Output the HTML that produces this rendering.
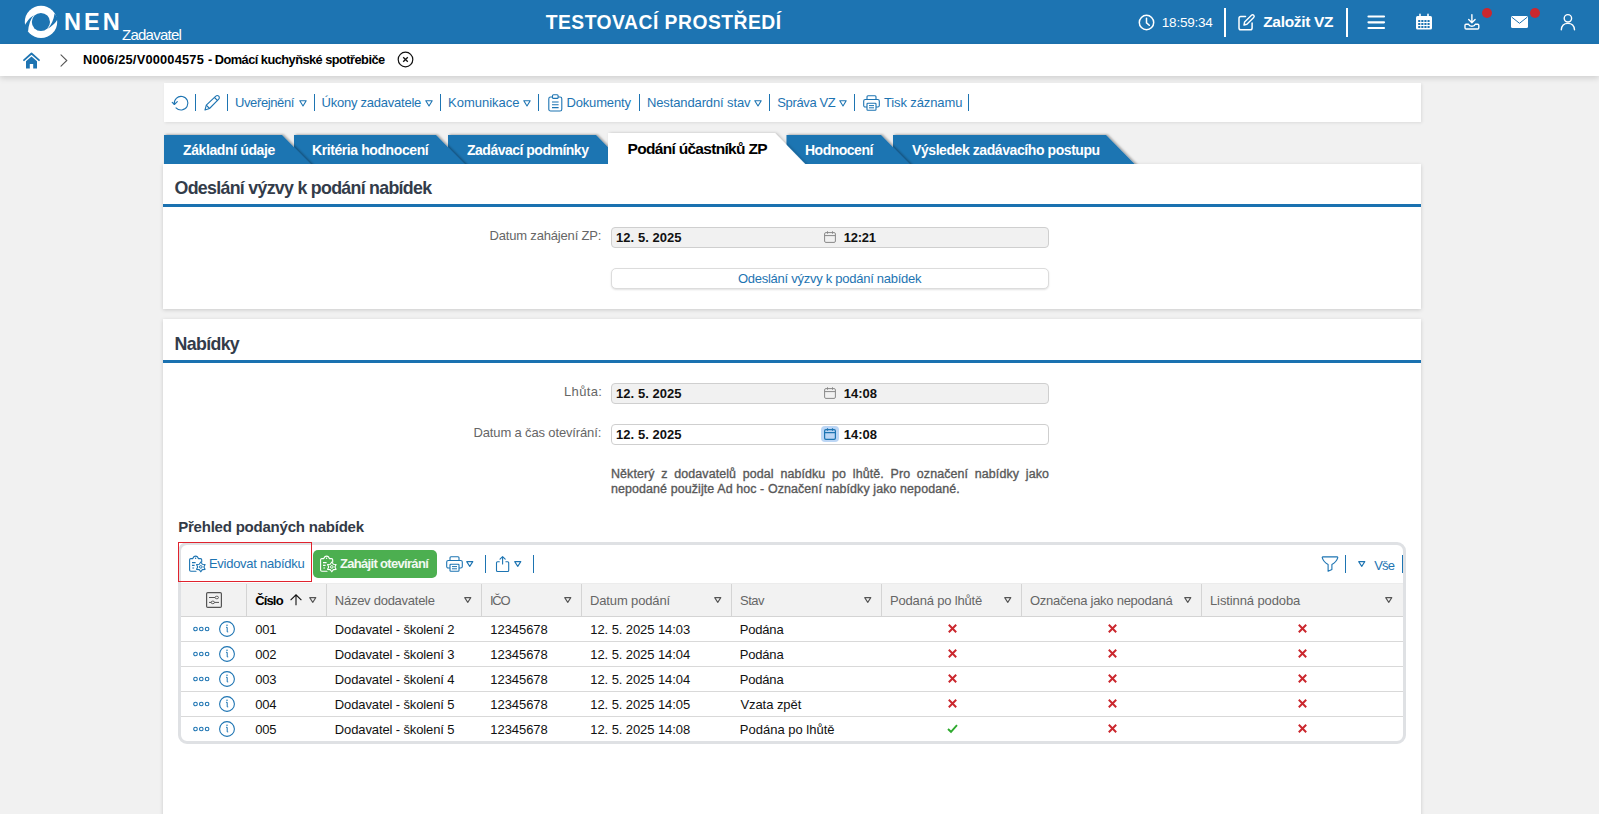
<!DOCTYPE html>
<html lang="cs"><head><meta charset="utf-8"><title>NEN - Zadavatel</title>
<style>
html,body{margin:0;padding:0}
body{width:1599px;height:814px;overflow:hidden;position:relative;background:#f1f1f1;font-family:"Liberation Sans",sans-serif;}
.a{position:absolute;box-sizing:border-box}
.t{position:absolute;white-space:nowrap;line-height:1;}
#hdr{left:0;top:0;width:1599px;height:44px;background:#1d74b2}
#bc{left:0;top:44px;width:1599px;height:32px;background:#fff;box-shadow:0 2px 6px rgba(0,0,0,.15)}
.panel{background:#fff;box-shadow:0 1px 4px rgba(0,0,0,.16)}
.bline{height:3px;background:#1a71b0;left:163px;width:1258px}
.sep{width:1px;background:#1d74b2;height:17px;top:94px}
.inp{left:611px;width:438px;height:21px;border:1px solid #cfcfcf;border-radius:4px;background:#f1f1f1}
.tab{top:135px;height:29px;background:#1d74b2}
svg{position:absolute;overflow:visible}
.hl{height:1px;background:#d9d9d9;left:181px;width:1222px}
.vl{width:1px;background:#d4d4d4;top:584px;height:33px}
.p{position:absolute;left:611px;top:467px;width:438px;font-size:12.45px;line-height:15px;color:#595959;text-align:justify;font-weight:400;-webkit-text-stroke:0.35px #595959;letter-spacing:0.1px}

</style></head>
<body>
<div class="a" id="hdr"></div>
<div class="a" id="bc"></div>
<!-- logo -->
<svg style="left:0;top:0" width="70" height="44" viewBox="0 0 70 44">
<circle cx="41" cy="21.900" r="16.200" fill="#fff"/>
<circle cx="40.900" cy="22" r="9.100" fill="#1d74b2"/>
<path d="M23.900 27.400 Q27.300 19.300 33.700 15.300 Q28.800 21 28 32 Z" fill="#1d74b2"/>
<path d="M58 18.600 Q54.700 25 47.500 28.800 Q53.200 23.300 54.600 13.500 Z" fill="#1d74b2"/>
</svg>
<!-- header separators -->
<div class="a" style="left:1224px;top:8px;width:2px;height:29px;background:#fff"></div>
<div class="a" style="left:1346px;top:8px;width:2px;height:29px;background:#fff"></div>
<!-- clock -->
<svg style="left:1138px;top:14px" width="17" height="17" viewBox="0 0 17 17"><circle cx="8.5" cy="8.5" r="7.2" fill="none" stroke="#fff" stroke-width="1.5"/><path d="M8.5 4.2V8.8L11.3 11.3" fill="none" stroke="#fff" stroke-width="1.5" stroke-linecap="round"/></svg>
<!-- edit -->
<svg style="left:1238px;top:13px" width="17" height="18" viewBox="0 0 17 18"><path d="M7.5 3.5H2.8C1.8 3.5 1 4.3 1 5.3V15c0 1 .8 1.8 1.8 1.8h9.5c1 0 1.8-.8 1.8-1.8V10" fill="none" stroke="#fff" stroke-width="1.5" stroke-linecap="round"/><path d="M6 12l.6-3L13.5 2.2c.6-.6 1.600-.6 2.200 0s.6 1.600 0 2.200L8.900 11.300z" fill="none" stroke="#fff" stroke-width="1.4" stroke-linejoin="round"/></svg>
<!-- hamburger -->
<svg style="left:1368px;top:15px" width="17" height="15" viewBox="0 0 17 15"><path d="M0.5 1.5H16M0.5 7.3H16M0.5 13H16" stroke="#fff" stroke-width="2.2" stroke-linecap="round"/></svg>
<!-- calendar -->
<svg style="left:0;top:0" width="1599" height="44" viewBox="0 0 1599 44"><rect x="1416" y="16" width="16" height="13.600" rx="1.500" fill="#fff"/><path d="M1420 14.300v3M1428 14.300v3" stroke="#fff" stroke-width="1.600" stroke-linecap="round"/><g fill="#1d74b2"><rect x="1418.2" y="20.0" width="2.100" height="2"/><rect x="1421.3" y="20.0" width="2.100" height="2"/><rect x="1424.4" y="20.0" width="2.100" height="2"/><rect x="1427.5" y="20.0" width="2.100" height="2"/><rect x="1418.2" y="23.0" width="2.100" height="2"/><rect x="1421.3" y="23.0" width="2.100" height="2"/><rect x="1424.4" y="23.0" width="2.100" height="2"/><rect x="1427.5" y="23.0" width="2.100" height="2"/><rect x="1418.2" y="26.0" width="2.100" height="2"/><rect x="1421.3" y="26.0" width="2.100" height="2"/><rect x="1424.4" y="26.0" width="2.100" height="2"/><rect x="1427.5" y="26.0" width="2.100" height="2"/></g></svg>
<!-- download -->
<svg style="left:0;top:0" width="1599" height="44" viewBox="0 0 1599 44"><path d="M1471.900 14.600v8M1468.700 19.600l3.200 3.200 3.200-3.200" fill="none" stroke="#fff" stroke-width="1.400" stroke-linecap="round" stroke-linejoin="round"/><path d="M1468.500 24.300h-2.500c-.6 0-1 .4-1 1v2.500c0 .7.600 1.200 1.200 1.200h11.400c.7 0 1.200-.5 1.200-1.200v-2.500c0-.6-.4-1-1-1h-2.500c-.5 1.400-1.700 2-3.400 2s-2.900-.6-3.400-2z" fill="none" stroke="#fff" stroke-width="1.400" stroke-linejoin="round"/></svg>
<div class="a" style="left:1482px;top:8px;width:10px;height:10px;border-radius:5px;background:#cb272e"></div>
<!-- mail -->
<svg style="left:1511.300px;top:16px" width="17" height="12" viewBox="0 0 17 12"><rect x="0" y="0" width="17" height="12" rx="1.500" fill="#fff"/><path d="M.8 1.200L8.500 7.300 16.200 1.200" fill="none" stroke="#1d74b2" stroke-width="1"/></svg>
<div class="a" style="left:1530px;top:8px;width:10px;height:10px;border-radius:5px;background:#cb272e"></div>
<!-- user -->
<svg style="left:0;top:0" width="1599" height="44" viewBox="0 0 1599 44"><circle cx="1567.900" cy="18.300" r="3.700" fill="none" stroke="#fff" stroke-width="1.400"/><path d="M1561.300 29.700c.3-4 3-6.300 6.600-6.300s6.300 2.300 6.600 6.300" fill="none" stroke="#fff" stroke-width="1.400" stroke-linecap="round"/></svg>

<!-- breadcrumb icons -->
<svg style="left:23px;top:51.700px" width="17" height="17" viewBox="0 0 17 17"><path d="M1 8.200L8.500 1.500 16 8.200" fill="none" stroke="#1d74b2" stroke-width="1.800" stroke-linecap="round" stroke-linejoin="round"/><path d="M3 9.300L8.500 4.400 14 9.300V16.500H10.200V12H6.800V16.500H3Z" fill="#1d74b2"/></svg>
<svg style="left:60px;top:54px" width="8" height="13" viewBox="0 0 8 13"><path d="M1 .8L6.800 6.500 1 12.200" fill="none" stroke="#555" stroke-width="1.100" stroke-linecap="round"/></svg>
<svg style="left:397px;top:51.300px" width="17" height="17" viewBox="0 0 17 17"><circle cx="8.500" cy="8.500" r="7.300" fill="none" stroke="#111" stroke-width="1.200"/><path d="M6.200 6.200l4.600 4.600M10.800 6.200l-4.600 4.600" stroke="#111" stroke-width="1.300"/></svg>

<!-- toolbar -->
<div class="a" style="left:164px;top:83px;width:1257px;height:39px;background:#fff;box-shadow:1px 1px 3px rgba(0,0,0,.09)"></div>
<div class="a sep" style="left:195px"></div>
<div class="a sep" style="left:227px"></div>
<div class="a sep" style="left:314px"></div>
<div class="a sep" style="left:440px"></div>
<div class="a sep" style="left:538px"></div>
<div class="a sep" style="left:639px"></div>
<div class="a sep" style="left:769px"></div>
<div class="a sep" style="left:854px"></div>
<div class="a sep" style="left:968px"></div>
<!-- refresh -->
<svg style="left:0;top:0" width="200" height="120" viewBox="0 0 200 120"><path d="M174.300 104.200A6.850 6.850 0 1 1 176 107.800" fill="none" stroke="#1d74b2" stroke-width="1.100" stroke-linecap="round"/><path d="M172.200 102.300L174.400 104.500 177.300 101.700" fill="none" stroke="#1d74b2" stroke-width="1.100" stroke-linecap="round" stroke-linejoin="round"/></svg>
<!-- pencil -->
<svg style="left:204px;top:95px" width="17" height="16" viewBox="0 0 17 16"><path d="M1 15l1.300-4.800L11.800 1.200c.8-.8 2.100-.8 2.900 0s.8 2.100 0 2.900L5.500 13.500z" fill="none" stroke="#1d74b2" stroke-width="1.100" stroke-linejoin="round"/><path d="M10.500 2.500l3.300 3.300M2.300 10.200l3.200 3.300" stroke="#1d74b2" stroke-width="1.100"/></svg>
<!-- tri -->
<svg class="tri" style="left:298.8px;top:99.800px" width="8" height="7" viewBox="0 0 8 7"><path d="M.8.800H7.200L4 6z" fill="none" stroke="#1d74b2" stroke-width="1.100" stroke-linejoin="round"/></svg>
<svg class="tri" style="left:424.8px;top:99.800px" width="8" height="7" viewBox="0 0 8 7"><path d="M.8.800H7.200L4 6z" fill="none" stroke="#1d74b2" stroke-width="1.100" stroke-linejoin="round"/></svg>
<svg class="tri" style="left:522.8px;top:99.800px" width="8" height="7" viewBox="0 0 8 7"><path d="M.8.800H7.200L4 6z" fill="none" stroke="#1d74b2" stroke-width="1.100" stroke-linejoin="round"/></svg>
<svg class="tri" style="left:754.2px;top:99.800px" width="8" height="7" viewBox="0 0 8 7"><path d="M.8.800H7.200L4 6z" fill="none" stroke="#1d74b2" stroke-width="1.100" stroke-linejoin="round"/></svg>
<svg class="tri" style="left:839.4px;top:99.800px" width="8" height="7" viewBox="0 0 8 7"><path d="M.8.800H7.200L4 6z" fill="none" stroke="#1d74b2" stroke-width="1.100" stroke-linejoin="round"/></svg>
<!-- clipboard -->
<svg style="left:548px;top:94px" width="15" height="18" viewBox="0 0 15 18"><rect x=".8" y="3" width="13" height="14" rx="1.800" fill="none" stroke="#1d74b2" stroke-width="1.100"/><rect x="4.500" y=".8" width="5.600" height="3.600" rx="1" fill="#fff" stroke="#1d74b2" stroke-width="1.100"/><path d="M4 8h6.600M4 10.800h6.600M4 13.600h6.600" stroke="#1d74b2" stroke-width="1.100"/></svg>
<!-- printer -->
<svg style="left:863px;top:95px" width="17" height="16" viewBox="0 0 17 16"><path d="M4 4.500V1.800c0-.6.400-1 1-1h7c.6 0 1 .4 1 1V4.500" fill="none" stroke="#1d74b2" stroke-width="1.100"/><path d="M4 12H2.300C1.400 12 .7 11.300.7 10.400V6.100c0-.9.700-1.600 1.600-1.600h12.400c.9 0 1.600.7 1.600 1.600v4.300c0 .9-.7 1.600-1.600 1.600H13" fill="none" stroke="#1d74b2" stroke-width="1.100"/><rect x="4" y="8.200" width="9" height="7" rx=".8" fill="#fff" stroke="#1d74b2" stroke-width="1.100"/><path d="M6 10.600h5M6 12.800h5" stroke="#1d74b2" stroke-width="1"/></svg>

<!-- tabs -->

<!-- panels -->
<div class="a panel" style="left:163px;top:164px;width:1258px;height:145px"></div>
<div class="a bline" style="top:204px"></div>
<svg style="left:0;top:0;overflow:hidden" width="1599" height="164" viewBox="0 0 1599 164"><defs><filter id="ts" x="-5%" y="-30%" width="110%" height="160%"><feDropShadow dx="1.5" dy="-0.5" stdDeviation="1.3" flood-color="#000" flood-opacity=".35"/></filter><filter id="ts2" x="-5%" y="-30%" width="110%" height="160%"><feDropShadow dx="1.5" dy="0" stdDeviation="1.4" flood-color="#000" flood-opacity=".22"/></filter></defs>
<path d="M893 172V135H1106L1142.5 172Z" fill="#1d74b2" filter="url(#ts)"/>
<path d="M786.5 172V135H881L917.5 172Z" fill="#1d74b2" filter="url(#ts)"/>
<path d="M448 172V135H596L632.5 172Z" fill="#1d74b2" filter="url(#ts)"/>
<path d="M294 172V135H436L472.5 172Z" fill="#1d74b2" filter="url(#ts)"/>
<path d="M164 172V135H282L318.5 172Z" fill="#1d74b2" filter="url(#ts)"/>
<path d="M608 172V133H775L813.0 172Z" fill="#fff" filter="url(#ts2)"/>
</svg>
<div class="a panel" style="left:163px;top:319px;width:1258px;height:510px"></div>
<div class="a bline" style="top:360px"></div>
<!-- inputs -->
<div class="a inp" style="top:227px"></div>
<div class="a inp" style="top:383px"></div>
<div class="a inp" style="top:424px;background:#fff"></div>
<div class="a" style="left:611px;top:268px;width:438px;height:21px;border:1px solid #dcdcdc;border-radius:5px;background:#fff;box-shadow:0 1px 2px rgba(0,0,0,.12)"></div>
<!-- cal icons -->
<svg style="left:824px;top:231px" width="12" height="12" viewBox="0 0 12 12"><rect x=".6" y="1.600" width="10.800" height="9.800" rx="1.300" fill="none" stroke="#888" stroke-width="1"/><path d="M.6 4.600h10.800M3.500.3v2.400M8.500.3v2.400" stroke="#888" stroke-width="1"/></svg>
<svg style="left:824px;top:387px" width="12" height="12" viewBox="0 0 12 12"><rect x=".6" y="1.600" width="10.800" height="9.800" rx="1.300" fill="none" stroke="#888" stroke-width="1"/><path d="M.6 4.600h10.800M3.500.3v2.400M8.500.3v2.400" stroke="#888" stroke-width="1"/></svg>
<div class="a" style="left:821px;top:426px;width:18px;height:16px;border-radius:4px;background:#bcd6f5"></div>
<svg style="left:824px;top:428px" width="12" height="12" viewBox="0 0 12 12"><rect x=".6" y="1.600" width="10.800" height="9.800" rx="1.300" fill="none" stroke="#1d74b2" stroke-width="1.200"/><path d="M.6 4.600h10.800M3.500.3v2.400M8.500.3v2.400" stroke="#1d74b2" stroke-width="1.200"/></svg>
<div class="p">Některý z dodavatelů podal nabídku po lhůtě. Pro označení nabídky jako nepodané použijte Ad hoc - Označení nabídky jako nepodané.</div>
<!-- grid -->
<div class="a" style="left:178px;top:542px;width:1228px;height:202px;border:3px solid #dfe1e4;border-radius:9px;background:#fff"></div>
<div class="a" style="left:181px;top:583px;width:1222px;height:34px;background:#f2f2f2;border-top:1px solid #ececec;border-bottom:1px solid #d4d4d4"></div>
<div class="a vl" style="left:246px"></div>
<div class="a vl" style="left:326px"></div>
<div class="a vl" style="left:481px"></div>
<div class="a vl" style="left:581px"></div>
<div class="a vl" style="left:731px"></div>
<div class="a vl" style="left:881px"></div>
<div class="a vl" style="left:1021px"></div>
<div class="a vl" style="left:1201px"></div>
<div class="a hl" style="top:641px"></div>
<div class="a hl" style="top:666px"></div>
<div class="a hl" style="top:691px"></div>
<div class="a hl" style="top:716px"></div>
<div class="a" style="left:178px;top:542px;width:134px;height:40px;border:1px solid #e0232e"></div>
<div class="a" style="left:313px;top:550px;width:124px;height:27.600px;border-radius:5px;background:#4caf50"></div>
<svg style="left:0px;top:0" width="230" height="600" viewBox="0 0 230 600"><path d="M196 571.300H190.800c-.7 0-1.200-.5-1.200-1.200V559.800c0-.7.500-1.200 1.200-1.200H192.800Q193.500 556.100 195.600 556.100Q197.700 556.100 198.400 558.600H200.500c.7 0 1.200.5 1.200 1.200V562" fill="none" stroke="#1d74b2" stroke-width="1.100" stroke-linecap="round" stroke-linejoin="round"/><circle cx="195.600" cy="558.300" r=".7" fill="#1d74b2"/><path d="M192 562.600h3.600M192 565.300h2.600M192.300 568h1.800" stroke="#1d74b2" stroke-width="1.200"/><path d="M200.80 562.00 L199.25 564.22 L196.56 564.45 L197.70 566.90 L196.56 569.35 L199.25 569.58 L200.80 571.80 L202.35 569.58 L205.04 569.35 L203.90 566.90 L205.04 564.45 L202.35 564.22Z" fill="#fff" stroke="#1d74b2" stroke-width="1.100" stroke-linejoin="round"/><circle cx="200.8" cy="566.9" r="1.300" fill="none" stroke="#1d74b2" stroke-width="1"/></svg>
<svg style="left:131.3px;top:0" width="230" height="600" viewBox="0 0 230 600"><path d="M196 571.300H190.800c-.7 0-1.200-.5-1.200-1.200V559.800c0-.7.500-1.200 1.200-1.200H192.800Q193.500 556.100 195.600 556.100Q197.700 556.100 198.400 558.600H200.500c.7 0 1.200.5 1.200 1.200V562" fill="none" stroke="#fff" stroke-width="1.100" stroke-linecap="round" stroke-linejoin="round"/><circle cx="195.600" cy="558.300" r=".7" fill="#fff"/><path d="M192 562.600h3.600M192 565.300h2.600M192.300 568h1.800" stroke="#fff" stroke-width="1.200"/><path d="M200.80 562.00 L199.25 564.22 L196.56 564.45 L197.70 566.90 L196.56 569.35 L199.25 569.58 L200.80 571.80 L202.35 569.58 L205.04 569.35 L203.90 566.90 L205.04 564.45 L202.35 564.22Z" fill="#4caf50" stroke="#fff" stroke-width="1.100" stroke-linejoin="round"/><circle cx="200.8" cy="566.9" r="1.300" fill="none" stroke="#fff" stroke-width="1"/></svg>
<svg style="left:445.500px;top:556px" width="17" height="16" viewBox="0 0 17 16"><path d="M4 4.500V1.800c0-.6.400-1 1-1h7c.6 0 1 .4 1 1V4.500" fill="none" stroke="#1d74b2" stroke-width="1.100"/><path d="M4 12H2.300C1.400 12 .7 11.300.7 10.400V6.100c0-.9.700-1.600 1.600-1.600h12.400c.9 0 1.600.7 1.600 1.600v4.300c0 .9-.7 1.600-1.600 1.600H13" fill="none" stroke="#1d74b2" stroke-width="1.100"/><rect x="4" y="8.200" width="9" height="7" rx=".8" fill="#fff" stroke="#1d74b2" stroke-width="1.100"/><path d="M6 10.600h5M6 12.800h5" stroke="#1d74b2" stroke-width="1"/></svg>
<svg style="left:466px;top:560.5px" width="7.5" height="6" viewBox="0 0 7.5 6"><path d="M.7.600H6.8L3.75 5.4z" fill="none" stroke="#1d74b2" stroke-width="1.100" stroke-linejoin="round"/></svg>
<svg style="left:513.700px;top:560.500px" width="7.5" height="6" viewBox="0 0 7.5 6"><path d="M.7.600H6.8L3.75 5.4z" fill="none" stroke="#1d74b2" stroke-width="1.100" stroke-linejoin="round"/></svg>
<svg style="left:1358px;top:561px" width="7.5" height="6" viewBox="0 0 7.5 6"><path d="M.7.600H6.8L3.75 5.4z" fill="none" stroke="#1d74b2" stroke-width="1.100" stroke-linejoin="round"/></svg>
<div class="a" style="left:485px;top:555px;width:1px;height:18px;background:#1d74b2"></div>
<div class="a" style="left:533px;top:555px;width:1px;height:18px;background:#1d74b2"></div>
<div class="a" style="left:1345px;top:555px;width:1px;height:18px;background:#1d74b2"></div>
<div class="a" style="left:1402px;top:555px;width:1px;height:18px;background:#1d74b2"></div>
<svg style="left:0;top:0" width="600" height="600" viewBox="0 0 600 600"><path d="M499.300 561.700H497.500c-.6 0-1 .4-1 1v7.800c0 .6.400 1 1 1h10.200c.6 0 1-.4 1-1v-7.800c0-.6-.4-1-1-1H505.900" fill="none" stroke="#1d74b2" stroke-width="1.100" stroke-linecap="round"/><path d="M502.600 564V556.800M500 559.200l2.600-2.600 2.600 2.600" fill="none" stroke="#1d74b2" stroke-width="1.100" stroke-linecap="round" stroke-linejoin="round"/></svg>
<svg style="left:0;top:0" width="1599" height="600" viewBox="0 0 1599 600"><path d="M1322.800 556.900H1337.200Q1338 556.900 1337.700 557.900C1336.800 561 1334.500 563 1331.900 564.400V569.400L1328.100 571.300V564.400C1325.500 563 1323.200 561 1322.300 557.900Q1322 556.900 1322.800 556.900Z" fill="none" stroke="#1d74b2" stroke-width="1.100" stroke-linejoin="round"/></svg>
<svg style="left:206px;top:592px" width="16" height="16" viewBox="0 0 16 16"><rect x=".6" y=".6" width="14.800" height="14.800" rx="1.200" fill="none" stroke="#555" stroke-width="1.200"/><path d="M3 5.500h6M3 10.400h2.300M8.400 10.400h4.600" stroke="#555" stroke-width="1"/><ellipse cx="10.800" cy="5.500" rx="1.700" ry="1.300" fill="none" stroke="#555" stroke-width=".9"/><ellipse cx="6.800" cy="10.400" rx="1.700" ry="1.300" fill="none" stroke="#555" stroke-width=".9"/></svg>
<svg style="left:290px;top:593.800px" width="12" height="12" viewBox="0 0 12 12"><path d="M6 11.300V1M.6 6.200L6 .8l5.400 5.400" fill="none" stroke="#111" stroke-width="1.100"/></svg>
<svg style="left:309.0px;top:597px" width="7.5" height="6" viewBox="0 0 7.5 6"><path d="M.7.600H6.8L3.75 5.4z" fill="none" stroke="#555" stroke-width="1.100" stroke-linejoin="round"/></svg>
<svg style="left:464.0px;top:597px" width="7.5" height="6" viewBox="0 0 7.5 6"><path d="M.7.600H6.8L3.75 5.4z" fill="none" stroke="#555" stroke-width="1.100" stroke-linejoin="round"/></svg>
<svg style="left:563.5px;top:597px" width="7.5" height="6" viewBox="0 0 7.5 6"><path d="M.7.600H6.8L3.75 5.4z" fill="none" stroke="#555" stroke-width="1.100" stroke-linejoin="round"/></svg>
<svg style="left:713.5px;top:597px" width="7.5" height="6" viewBox="0 0 7.5 6"><path d="M.7.600H6.8L3.75 5.4z" fill="none" stroke="#555" stroke-width="1.100" stroke-linejoin="round"/></svg>
<svg style="left:864.0px;top:597px" width="7.5" height="6" viewBox="0 0 7.5 6"><path d="M.7.600H6.8L3.75 5.4z" fill="none" stroke="#555" stroke-width="1.100" stroke-linejoin="round"/></svg>
<svg style="left:1004.0px;top:597px" width="7.5" height="6" viewBox="0 0 7.5 6"><path d="M.7.600H6.8L3.75 5.4z" fill="none" stroke="#555" stroke-width="1.100" stroke-linejoin="round"/></svg>
<svg style="left:1184.0px;top:597px" width="7.5" height="6" viewBox="0 0 7.5 6"><path d="M.7.600H6.8L3.75 5.4z" fill="none" stroke="#555" stroke-width="1.100" stroke-linejoin="round"/></svg>
<svg style="left:1385.0px;top:597px" width="7.5" height="6" viewBox="0 0 7.5 6"><path d="M.7.600H6.8L3.75 5.4z" fill="none" stroke="#555" stroke-width="1.100" stroke-linejoin="round"/></svg>
<svg style="left:192.500px;top:626px" width="17" height="6" viewBox="0 0 17 6"><g fill="none" stroke="#1d74b2" stroke-width="1.100"><circle cx="2.500" cy="3" r="1.800"/><circle cx="8.300" cy="3" r="1.800"/><circle cx="14.100" cy="3" r="1.800"/></g></svg>
<svg style="left:219px;top:621px" width="16" height="16" viewBox="0 0 16 16"><circle cx="8" cy="8" r="7.400" fill="none" stroke="#1d74b2" stroke-width="1.100"/><path d="M7 6.300h1.200v4.600h1" fill="none" stroke="#1d74b2" stroke-width="1"/><circle cx="8" cy="4.300" r=".75" fill="#1d74b2"/></svg>
<svg style="left:948.0px;top:623.5px" width="9" height="9" viewBox="0 0 9 9"><path d="M.8.800L8.200 8.200M8.200.8L.8 8.200" stroke="#cb272e" stroke-width="2"/></svg>
<svg style="left:1108.0px;top:623.5px" width="9" height="9" viewBox="0 0 9 9"><path d="M.8.800L8.200 8.200M8.200.8L.8 8.200" stroke="#cb272e" stroke-width="2"/></svg>
<svg style="left:1298.3px;top:623.5px" width="9" height="9" viewBox="0 0 9 9"><path d="M.8.800L8.200 8.200M8.200.8L.8 8.200" stroke="#cb272e" stroke-width="2"/></svg>
<svg style="left:192.500px;top:651px" width="17" height="6" viewBox="0 0 17 6"><g fill="none" stroke="#1d74b2" stroke-width="1.100"><circle cx="2.500" cy="3" r="1.800"/><circle cx="8.300" cy="3" r="1.800"/><circle cx="14.100" cy="3" r="1.800"/></g></svg>
<svg style="left:219px;top:646px" width="16" height="16" viewBox="0 0 16 16"><circle cx="8" cy="8" r="7.400" fill="none" stroke="#1d74b2" stroke-width="1.100"/><path d="M7 6.300h1.200v4.600h1" fill="none" stroke="#1d74b2" stroke-width="1"/><circle cx="8" cy="4.300" r=".75" fill="#1d74b2"/></svg>
<svg style="left:948.0px;top:648.5px" width="9" height="9" viewBox="0 0 9 9"><path d="M.8.800L8.200 8.200M8.200.8L.8 8.200" stroke="#cb272e" stroke-width="2"/></svg>
<svg style="left:1108.0px;top:648.5px" width="9" height="9" viewBox="0 0 9 9"><path d="M.8.800L8.200 8.200M8.200.8L.8 8.200" stroke="#cb272e" stroke-width="2"/></svg>
<svg style="left:1298.3px;top:648.5px" width="9" height="9" viewBox="0 0 9 9"><path d="M.8.800L8.200 8.200M8.200.8L.8 8.200" stroke="#cb272e" stroke-width="2"/></svg>
<svg style="left:192.500px;top:676px" width="17" height="6" viewBox="0 0 17 6"><g fill="none" stroke="#1d74b2" stroke-width="1.100"><circle cx="2.500" cy="3" r="1.800"/><circle cx="8.300" cy="3" r="1.800"/><circle cx="14.100" cy="3" r="1.800"/></g></svg>
<svg style="left:219px;top:671px" width="16" height="16" viewBox="0 0 16 16"><circle cx="8" cy="8" r="7.400" fill="none" stroke="#1d74b2" stroke-width="1.100"/><path d="M7 6.300h1.200v4.600h1" fill="none" stroke="#1d74b2" stroke-width="1"/><circle cx="8" cy="4.300" r=".75" fill="#1d74b2"/></svg>
<svg style="left:948.0px;top:673.5px" width="9" height="9" viewBox="0 0 9 9"><path d="M.8.800L8.200 8.200M8.200.8L.8 8.200" stroke="#cb272e" stroke-width="2"/></svg>
<svg style="left:1108.0px;top:673.5px" width="9" height="9" viewBox="0 0 9 9"><path d="M.8.800L8.200 8.200M8.200.8L.8 8.200" stroke="#cb272e" stroke-width="2"/></svg>
<svg style="left:1298.3px;top:673.5px" width="9" height="9" viewBox="0 0 9 9"><path d="M.8.800L8.200 8.200M8.200.8L.8 8.200" stroke="#cb272e" stroke-width="2"/></svg>
<svg style="left:192.500px;top:701px" width="17" height="6" viewBox="0 0 17 6"><g fill="none" stroke="#1d74b2" stroke-width="1.100"><circle cx="2.500" cy="3" r="1.800"/><circle cx="8.300" cy="3" r="1.800"/><circle cx="14.100" cy="3" r="1.800"/></g></svg>
<svg style="left:219px;top:696px" width="16" height="16" viewBox="0 0 16 16"><circle cx="8" cy="8" r="7.400" fill="none" stroke="#1d74b2" stroke-width="1.100"/><path d="M7 6.300h1.200v4.600h1" fill="none" stroke="#1d74b2" stroke-width="1"/><circle cx="8" cy="4.300" r=".75" fill="#1d74b2"/></svg>
<svg style="left:948.0px;top:698.5px" width="9" height="9" viewBox="0 0 9 9"><path d="M.8.800L8.200 8.200M8.200.8L.8 8.200" stroke="#cb272e" stroke-width="2"/></svg>
<svg style="left:1108.0px;top:698.5px" width="9" height="9" viewBox="0 0 9 9"><path d="M.8.800L8.200 8.200M8.200.8L.8 8.200" stroke="#cb272e" stroke-width="2"/></svg>
<svg style="left:1298.3px;top:698.5px" width="9" height="9" viewBox="0 0 9 9"><path d="M.8.800L8.200 8.200M8.200.8L.8 8.200" stroke="#cb272e" stroke-width="2"/></svg>
<svg style="left:192.500px;top:726px" width="17" height="6" viewBox="0 0 17 6"><g fill="none" stroke="#1d74b2" stroke-width="1.100"><circle cx="2.500" cy="3" r="1.800"/><circle cx="8.300" cy="3" r="1.800"/><circle cx="14.100" cy="3" r="1.800"/></g></svg>
<svg style="left:219px;top:721px" width="16" height="16" viewBox="0 0 16 16"><circle cx="8" cy="8" r="7.400" fill="none" stroke="#1d74b2" stroke-width="1.100"/><path d="M7 6.300h1.200v4.600h1" fill="none" stroke="#1d74b2" stroke-width="1"/><circle cx="8" cy="4.300" r=".75" fill="#1d74b2"/></svg>
<svg style="left:947.0px;top:724.0px" width="11" height="9" viewBox="0 0 11 9"><path d="M1 5L4 7.800 10 1.200" fill="none" stroke="#2eaa2e" stroke-width="1.900"/></svg>
<svg style="left:1108.0px;top:723.5px" width="9" height="9" viewBox="0 0 9 9"><path d="M.8.800L8.200 8.200M8.200.8L.8 8.200" stroke="#cb272e" stroke-width="2"/></svg>
<svg style="left:1298.3px;top:723.5px" width="9" height="9" viewBox="0 0 9 9"><path d="M.8.800L8.200 8.200M8.200.8L.8 8.200" stroke="#cb272e" stroke-width="2"/></svg>


<!-- texts -->
<span class="t" style="left:64.00px;top:11.00px;font-size:23.5px;font-weight:700;color:#fff;letter-spacing:3.000px;">NEN</span>
<span class="t" style="left:122.00px;top:27.00px;font-size:15px;color:#fff;letter-spacing:-0.750px;">Zadavatel</span>
<span class="t" style="left:545.70px;top:13.00px;font-size:19.3px;font-weight:700;color:#fff;letter-spacing:0.500px;">TESTOVACÍ PROSTŘEDÍ</span>
<span class="t" style="left:1161.80px;top:16.00px;font-size:13.5px;color:#fff;letter-spacing:-0.214px;">18:59:34</span>
<span class="t" style="left:1263.20px;top:14.00px;font-size:15.5px;font-weight:700;color:#fff;letter-spacing:-0.311px;">Založit VZ</span>
<span class="t" style="left:83.00px;top:54.00px;font-size:12.8px;font-weight:700;color:#000;letter-spacing:0.212px;">N006/25/V00004575</span>
<span class="t" style="left:208.00px;top:54.00px;font-size:12.8px;font-weight:700;color:#000;letter-spacing:-0.532px;">- Domácí kuchyňské spotřebiče</span>
<span class="t" style="left:235.00px;top:96.00px;font-size:13px;color:#1d74b2;letter-spacing:-0.389px;">Uveřejnění</span>
<span class="t" style="left:321.50px;top:96.00px;font-size:13px;color:#1d74b2;letter-spacing:-0.233px;">Úkony zadavatele</span>
<span class="t" style="left:448.00px;top:96.00px;font-size:13px;color:#1d74b2;">Komunikace</span>
<span class="t" style="left:566.40px;top:96.00px;font-size:13px;color:#1d74b2;letter-spacing:-0.150px;">Dokumenty</span>
<span class="t" style="left:647.00px;top:96.00px;font-size:13px;color:#1d74b2;letter-spacing:-0.125px;">Nestandardní stav</span>
<span class="t" style="left:777.30px;top:96.00px;font-size:13px;color:#1d74b2;letter-spacing:-0.362px;">Správa VZ</span>
<span class="t" style="left:883.90px;top:96.00px;font-size:13px;color:#1d74b2;letter-spacing:-0.109px;">Tisk záznamu</span>
<span class="t" style="left:183.00px;top:143.00px;font-size:14px;font-weight:700;color:#fff;letter-spacing:-0.385px;">Základní údaje</span>
<span class="t" style="left:312.00px;top:143.00px;font-size:14px;font-weight:700;color:#fff;letter-spacing:-0.412px;">Kritéria hodnocení</span>
<span class="t" style="left:467.00px;top:143.00px;font-size:14px;font-weight:700;color:#fff;letter-spacing:-0.500px;">Zadávací podmínky</span>
<span class="t" style="left:805.00px;top:143.00px;font-size:14px;font-weight:700;color:#fff;letter-spacing:-0.500px;">Hodnocení</span>
<span class="t" style="left:912.00px;top:143.00px;font-size:14px;font-weight:700;color:#fff;letter-spacing:-0.423px;">Výsledek zadávacího postupu</span>
<span class="t" style="left:627.50px;top:141.00px;font-size:15.5px;font-weight:700;color:#000;letter-spacing:-0.689px;">Podání účastníků ZP</span>
<span class="t" style="left:174.60px;top:180.00px;font-size:17.8px;font-weight:700;color:#333c4a;letter-spacing:-0.707px;">Odeslání výzvy k podání nabídek</span>
<span class="t" style="left:174.60px;top:336.00px;font-size:17.8px;font-weight:700;color:#333c4a;letter-spacing:-0.667px;">Nabídky</span>
<span class="t" style="left:489.50px;top:229.00px;font-size:13px;color:#666;letter-spacing:-0.176px;">Datum zahájení ZP:</span>
<span class="t" style="left:564.00px;top:385.00px;font-size:13px;color:#666;letter-spacing:0.360px;">Lhůta:</span>
<span class="t" style="left:473.50px;top:426.00px;font-size:13px;color:#666;letter-spacing:-0.143px;">Datum a čas otevírání:</span>
<span class="t" style="left:616.00px;top:231.00px;font-size:13px;font-weight:700;color:#111;letter-spacing:0.050px;">12. 5. 2025</span>
<span class="t" style="left:843.70px;top:231.00px;font-size:13px;font-weight:700;color:#111;letter-spacing:-0.250px;">12:21</span>
<span class="t" style="left:616.00px;top:387.00px;font-size:13px;font-weight:700;color:#111;letter-spacing:0.050px;">12. 5. 2025</span>
<span class="t" style="left:843.70px;top:387.00px;font-size:13px;font-weight:700;color:#111;">14:08</span>
<span class="t" style="left:616.00px;top:428.00px;font-size:13px;font-weight:700;color:#111;letter-spacing:0.050px;">12. 5. 2025</span>
<span class="t" style="left:843.70px;top:428.00px;font-size:13px;font-weight:700;color:#111;">14:08</span>
<span class="t" style="left:738.00px;top:272.00px;font-size:13px;color:#1d74b2;letter-spacing:-0.267px;">Odeslání výzvy k podání nabídek</span>
<span class="t" style="left:178.20px;top:519.00px;font-size:15px;font-weight:700;color:#333a46;letter-spacing:-0.217px;">Přehled podaných nabídek</span>
<span class="t" style="left:208.90px;top:557.00px;font-size:13px;color:#1d74b2;letter-spacing:-0.260px;">Evidovat nabídku</span>
<span class="t" style="left:340.00px;top:557.00px;font-size:13px;font-weight:700;color:#f1f9f1;letter-spacing:-0.681px;">Zahájit otevírání</span>
<span class="t" style="left:1374.20px;top:559.00px;font-size:13px;color:#1d74b2;letter-spacing:-0.800px;">Vše</span>
<span class="t" style="left:255.20px;top:594.00px;font-size:13px;font-weight:700;color:#000;letter-spacing:-0.850px;">Číslo</span>
<span class="t" style="left:334.80px;top:594.00px;font-size:13px;color:#666;letter-spacing:-0.260px;">Název dodavatele</span>
<span class="t" style="left:490.00px;top:594.00px;font-size:13px;color:#666;letter-spacing:-1.250px;">IČO</span>
<span class="t" style="left:590.00px;top:594.00px;font-size:13px;color:#666;letter-spacing:-0.136px;">Datum podání</span>
<span class="t" style="left:740.00px;top:594.00px;font-size:13px;color:#666;letter-spacing:-0.500px;">Stav</span>
<span class="t" style="left:890.00px;top:594.00px;font-size:13px;color:#666;letter-spacing:-0.179px;">Podaná po lhůtě</span>
<span class="t" style="left:1030.00px;top:594.00px;font-size:13px;color:#666;letter-spacing:-0.262px;">Označena jako nepodaná</span>
<span class="t" style="left:1210.00px;top:594.00px;font-size:13px;color:#666;letter-spacing:-0.107px;">Listinná podoba</span>
<span class="t" style="left:255.20px;top:623.00px;font-size:13px;color:#111;letter-spacing:-0.200px;">001</span>
<span class="t" style="left:334.80px;top:623.00px;font-size:13px;color:#111;letter-spacing:-0.120px;">Dodavatel - školení 2</span>
<span class="t" style="left:490.30px;top:623.00px;font-size:13px;color:#111;letter-spacing:-0.057px;">12345678</span>
<span class="t" style="left:590.30px;top:623.00px;font-size:13px;color:#111;letter-spacing:-0.087px;">12. 5. 2025 14:03</span>
<span class="t" style="left:739.80px;top:623.00px;font-size:13px;color:#111;letter-spacing:-0.200px;">Podána</span>
<span class="t" style="left:255.20px;top:648.00px;font-size:13px;color:#111;letter-spacing:-0.200px;">002</span>
<span class="t" style="left:334.80px;top:648.00px;font-size:13px;color:#111;letter-spacing:-0.120px;">Dodavatel - školení 3</span>
<span class="t" style="left:490.30px;top:648.00px;font-size:13px;color:#111;letter-spacing:-0.057px;">12345678</span>
<span class="t" style="left:590.30px;top:648.00px;font-size:13px;color:#111;letter-spacing:-0.087px;">12. 5. 2025 14:04</span>
<span class="t" style="left:739.80px;top:648.00px;font-size:13px;color:#111;letter-spacing:-0.200px;">Podána</span>
<span class="t" style="left:255.20px;top:673.00px;font-size:13px;color:#111;letter-spacing:-0.200px;">003</span>
<span class="t" style="left:334.80px;top:673.00px;font-size:13px;color:#111;letter-spacing:-0.120px;">Dodavatel - školení 4</span>
<span class="t" style="left:490.30px;top:673.00px;font-size:13px;color:#111;letter-spacing:-0.057px;">12345678</span>
<span class="t" style="left:590.30px;top:673.00px;font-size:13px;color:#111;letter-spacing:-0.087px;">12. 5. 2025 14:04</span>
<span class="t" style="left:739.80px;top:673.00px;font-size:13px;color:#111;letter-spacing:-0.200px;">Podána</span>
<span class="t" style="left:255.20px;top:698.00px;font-size:13px;color:#111;letter-spacing:-0.200px;">004</span>
<span class="t" style="left:334.80px;top:698.00px;font-size:13px;color:#111;letter-spacing:-0.120px;">Dodavatel - školení 5</span>
<span class="t" style="left:490.30px;top:698.00px;font-size:13px;color:#111;letter-spacing:-0.057px;">12345678</span>
<span class="t" style="left:590.30px;top:698.00px;font-size:13px;color:#111;letter-spacing:-0.087px;">12. 5. 2025 14:05</span>
<span class="t" style="left:740.40px;top:698.00px;font-size:13px;color:#111;letter-spacing:-0.056px;">Vzata zpět</span>
<span class="t" style="left:255.20px;top:723.00px;font-size:13px;color:#111;letter-spacing:-0.200px;">005</span>
<span class="t" style="left:334.80px;top:723.00px;font-size:13px;color:#111;letter-spacing:-0.120px;">Dodavatel - školení 5</span>
<span class="t" style="left:490.30px;top:723.00px;font-size:13px;color:#111;letter-spacing:-0.057px;">12345678</span>
<span class="t" style="left:590.30px;top:723.00px;font-size:13px;color:#111;letter-spacing:-0.087px;">12. 5. 2025 14:08</span>
<span class="t" style="left:739.80px;top:723.00px;font-size:13px;color:#111;">Podána po lhůtě</span>
</body></html>
